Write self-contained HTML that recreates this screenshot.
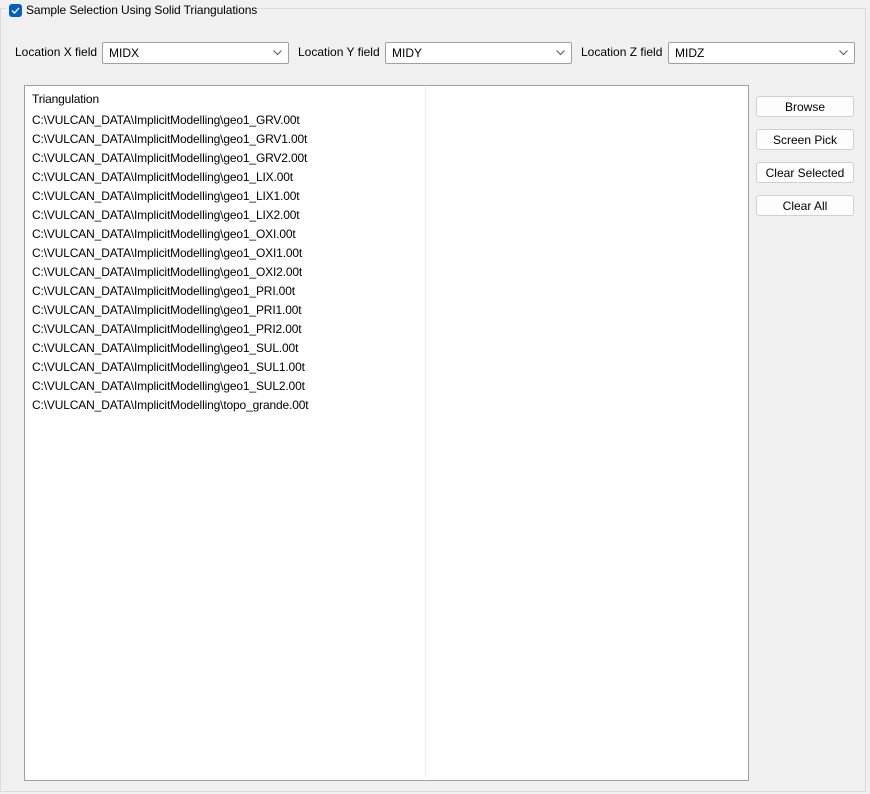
<!DOCTYPE html>
<html><head><style>
body{margin:0;width:870px;height:794px;background:#f0f0f0;font-family:"Liberation Sans",sans-serif;font-size:12px;color:#000;position:relative;overflow:hidden}
.abs{position:absolute}
.grp{left:0;top:8px;width:866px;height:784px;border:1px solid #dcdcdc;box-sizing:border-box}
.chk{left:9px;top:4px;width:13px;height:13px;background:#005fb8;border-radius:3px}
.lbl{white-space:nowrap}
.cb{height:22px;background:#fff;border:1px solid #a0a0a0;border-radius:2px;box-sizing:border-box;padding-left:6px;line-height:20px}
.cb svg{position:absolute;right:6px;top:7px}
.list{left:24px;top:85px;width:725px;height:696px;background:#fff;border:1px solid #a0a0a0;box-sizing:border-box}
.btn{left:756px;width:98px;height:21px;background:#fdfdfd;border:1px solid #d0d0d0;border-radius:3px;box-sizing:border-box;text-align:center;line-height:21px}
.row{left:32px;white-space:nowrap;letter-spacing:-0.15px}
</style></head><body>
<div class="abs grp"></div>
<div class="abs" style="left:6px;top:0;width:250px;height:18px;background:#f0f0f0"></div>
<div class="abs chk"><svg width="13" height="13"><path d="M3 6.5l2.5 2.5 4.5-5" stroke="#fff" stroke-width="1.3" fill="none"/></svg></div>
<div class="abs lbl" style="left:26px;top:3px;letter-spacing:-0.1px">Sample Selection Using Solid Triangulations</div>

<div class="abs lbl" style="left:15px;top:45px">Location X field</div>
<div class="abs cb" style="left:102px;top:42px;width:187px">MIDX<svg width="9" height="6"><path d="M.5 .5l4 4 4-4" stroke="#555" fill="none"/></svg></div>
<div class="abs lbl" style="left:298px;top:45px">Location Y field</div>
<div class="abs cb" style="left:385px;top:42px;width:187px">MIDY<svg width="9" height="6"><path d="M.5 .5l4 4 4-4" stroke="#555" fill="none"/></svg></div>
<div class="abs lbl" style="left:581px;top:45px">Location Z field</div>
<div class="abs cb" style="left:668px;top:42px;width:187px">MIDZ<svg width="9" height="6"><path d="M.5 .5l4 4 4-4" stroke="#555" fill="none"/></svg></div>

<div class="abs list"></div>
<div class="abs" style="left:425px;top:86px;width:1px;height:692px;background:#e8eef5"></div>
<div class="abs row" style="top:92px">Triangulation</div>
<div class="abs row" style="top:111px;line-height:19px">C:\VULCAN_DATA\ImplicitModelling\geo1_GRV.00t<br>C:\VULCAN_DATA\ImplicitModelling\geo1_GRV1.00t<br>C:\VULCAN_DATA\ImplicitModelling\geo1_GRV2.00t<br>C:\VULCAN_DATA\ImplicitModelling\geo1_LIX.00t<br>C:\VULCAN_DATA\ImplicitModelling\geo1_LIX1.00t<br>C:\VULCAN_DATA\ImplicitModelling\geo1_LIX2.00t<br>C:\VULCAN_DATA\ImplicitModelling\geo1_OXI.00t<br>C:\VULCAN_DATA\ImplicitModelling\geo1_OXI1.00t<br>C:\VULCAN_DATA\ImplicitModelling\geo1_OXI2.00t<br>C:\VULCAN_DATA\ImplicitModelling\geo1_PRI.00t<br>C:\VULCAN_DATA\ImplicitModelling\geo1_PRI1.00t<br>C:\VULCAN_DATA\ImplicitModelling\geo1_PRI2.00t<br>C:\VULCAN_DATA\ImplicitModelling\geo1_SUL.00t<br>C:\VULCAN_DATA\ImplicitModelling\geo1_SUL1.00t<br>C:\VULCAN_DATA\ImplicitModelling\geo1_SUL2.00t<br>C:\VULCAN_DATA\ImplicitModelling\topo_grande.00t</div>

<div class="abs btn" style="top:96px">Browse</div>
<div class="abs btn" style="top:129px">Screen Pick</div>
<div class="abs btn" style="top:162px">Clear Selected</div>
<div class="abs btn" style="top:195px">Clear All</div>
</body></html>
